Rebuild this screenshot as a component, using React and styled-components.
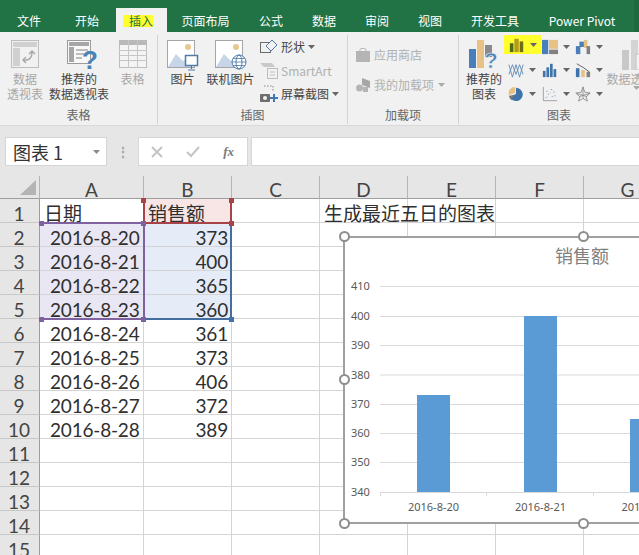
import React from 'react';
import styled, { createGlobalStyle } from 'styled-components';

const Global = createGlobalStyle`
  html, body { margin: 0; padding: 0; background: #fff; }
  body { font-family: "Noto Sans CJK SC", "Noto Sans", sans-serif; }
`;

const tabs = [
  ['文件', 58], ['开始', 58], ['插入', 51], ['页面布局', 77], ['公式', 54], ['数据', 52],
  ['审阅', 54], ['视图', 52], ['开发工具', 78], ['Power Pivot', 96],
];

const rows = [
  ['日期', '销售额', '', '生成最近五日的图表'],
  ['2016-8-20', '373'], ['2016-8-21', '400'], ['2016-8-22', '365'], ['2016-8-23', '360'],
  ['2016-8-24', '361'], ['2016-8-25', '373'], ['2016-8-26', '406'], ['2016-8-27', '372'],
  ['2016-8-28', '389'], [], [], [], [], [],
];
const letters = ['A', 'B', 'C', 'D', 'E', 'F', 'G'];

const ticks = [410, 400, 390, 380, 370, 360, 350, 340];
const tickY = [286, 316, 345, 374.5, 404, 433, 462, 492];
const bars = [
  { x: 417, y: 395, label: '2016-8-20', cx: 433.5 },
  { x: 524, y: 316, label: '2016-8-21', cx: 540.5 },
  { x: 630, y: 419, label: '2016-8-22', cx: 647 },
];

function Caret({ color = '#666' }) {
  return <svg width="7" height="4" viewBox="0 0 7 4"><path d="M0 0h7L3.500 4z" fill={color} /></svg>;
}

function PivotIcon() {
  return (
    <svg width="28" height="28" viewBox="0 0 28 28">
      <rect x="0.5" y="0.500" width="27" height="27" fill="#f1f1f1" stroke="#bdbdbd" />
      <rect x="2" y="2" width="24" height="5" fill="#d0d0d0" />
      <rect x="2" y="8" width="7" height="18" fill="#d0d0d0" />
      <path d="M12 20c6 1 9-2 9-8M18 14l3-3 3 3M15 17l-3 3 3 3" fill="none" stroke="#a9a9a9" strokeWidth="1.500" />
    </svg>
  );
}

function RecommendPivotIcon() {
  return (
    <svg width="28" height="28" viewBox="0 0 28 28" overflow="visible">
      <rect x="2.500" y="0.500" width="23" height="23" fill="#f8f8f8" stroke="#9c9c9c" />
      <rect x="4" y="2" width="20" height="4" fill="#a6a6a6" />
      <rect x="4" y="7" width="5" height="15" fill="#a6a6a6" />
      <path d="M11 10h12M11 14h8M11 18h6" stroke="#bdbdbd" strokeWidth="2" />
      <text x="25" y="29" textAnchor="middle" fontFamily="Liberation Sans" fontWeight="700" fontSize="26" fill="#4a83b5">?</text>
    </svg>
  );
}

function TableIcon() {
  return (
    <svg width="28" height="28" viewBox="0 0 28 28">
      <rect x="0.500" y="0.500" width="27" height="27" fill="#f4f4f4" stroke="#bcbcbc" />
      <rect x="0" y="0" width="28" height="5" fill="#b9b9b9" />
      <path d="M0 10.500h28M0 15.500h28M0 20.500h28M9.500 0v28M18.500 0v28" stroke="#c6c6c6" />
    </svg>
  );
}

function PictureBase() {
  return (
    <>
      <rect x="0.500" y="0.500" width="27" height="27" fill="#fff" stroke="#a5a5a5" />
      <circle cx="21" cy="7" r="3" fill="#e6c88e" />
      <path d="M1 27l8-13 7 7 3-2 5 8z" fill="#c6d5e8" />
    </>
  );
}

function PictureIcon() {
  return (
    <svg width="32" height="32" viewBox="0 0 32 32">
      <PictureBase />
      <rect x="18.500" y="15.500" width="12" height="10" fill="#fff" stroke="#4f7ba6" strokeWidth="1.500" />
      <path d="M24.500 26v3M21 30h7" stroke="#4f7ba6" strokeWidth="1.200" />
    </svg>
  );
}

function OnlineIcon() {
  return (
    <svg width="32" height="32" viewBox="0 0 32 32">
      <PictureBase />
      <circle cx="24" cy="22" r="7" fill="#fff" stroke="#4f7ba6" />
      <ellipse cx="24" cy="22" rx="3" ry="7" fill="none" stroke="#4f7ba6" />
      <path d="M17 22h14M18 18.500h12M18 25.500h12" stroke="#4f7ba6" strokeWidth="0.800" />
    </svg>
  );
}

function ShapesIcon() {
  return (
    <svg width="18" height="16" viewBox="0 0 18 16">
      <rect x="0.500" y="3.500" width="10" height="10" fill="none" stroke="#6b6b6b" />
      <path d="M12 1l5 5-6 6-5-5z" fill="#f1f1f1" stroke="#4f7ba6" />
    </svg>
  );
}

function SmartArtIcon() {
  return (
    <svg width="18" height="18" viewBox="0 0 18 18">
      <path d="M0 2h12l3 4H4z" fill="#c9c9c9" />
      <rect x="7.500" y="7.500" width="10" height="10" fill="#f1f1f1" stroke="#bdbdbd" />
      <path d="M10 11h5M10 14h5" stroke="#c4c4c4" />
    </svg>
  );
}

function ScreenshotIcon() {
  return (
    <svg width="18" height="18" viewBox="0 0 18 18">
      <path d="M4 1h9v5" fill="none" stroke="#8a8a8a" strokeDasharray="1.500 1.500" />
      <rect x="0" y="9" width="10" height="8" rx="1" fill="#6d6d6d" />
      <circle cx="5" cy="13" r="2" fill="#f1f1f1" />
      <path d="M14 9v8M10 13h8" stroke="#3f78b5" strokeWidth="2" />
    </svg>
  );
}

function StoreIcon() {
  return (
    <svg width="14" height="16" viewBox="0 0 14 16">
      <path d="M0 4h14v11H0z" fill="#b5b5b5" />
      <path d="M4 5V2.500C4 1 10 1 10 2.500V5" fill="none" stroke="#b5b5b5" />
    </svg>
  );
}

function AddinIcon() {
  return (
    <svg width="14" height="16" viewBox="0 0 14 16">
      <path d="M6 1l8 3v7l-8-3z" fill="#a7a7a7" />
      <circle cx="3.500" cy="11" r="3.500" fill="#b5b5b5" />
      <rect x="7" y="10" width="5" height="5" fill="#b5b5b5" />
    </svg>
  );
}

function RecommendChartIcon() {
  return (
    <svg width="30" height="30" viewBox="0 0 30 30" overflow="visible">
      <rect x="0" y="9" width="7" height="19" fill="#4a7ebb" />
      <rect x="8" y="0" width="7" height="28" fill="#e8c184" />
      <rect x="16" y="5" width="7" height="12" fill="#8a8a8a" />
      <text x="22" y="28" textAnchor="middle" fontFamily="Liberation Sans" fontWeight="700" fontSize="22" fill="#4a83b5" stroke="#f1f1f1" strokeWidth="0.500">?</text>
    </svg>
  );
}

const miniIcons = [
  <><rect x="1" y="7" width="4" height="10" fill="#4f6d12" /><rect x="6" y="2" width="5" height="15" fill="#b59a22" /><rect x="12" y="5" width="4" height="12" fill="#6f6f12" /></>,
  <><rect x="0" y="1" width="7" height="16" fill="#4a7ebb" /><rect x="8" y="1" width="10" height="10" fill="#e8c184" /><rect x="8" y="12" width="10" height="5" fill="#808080" /></>,
  <><rect x="1" y="8" width="5" height="9" fill="#4a7ebb" /><rect x="5" y="3" width="5" height="6" fill="#4a7ebb" /><rect x="10" y="1" width="4" height="9" fill="#e8c184" /><rect x="13" y="8" width="4" height="9" fill="#808080" /></>,
  <path d="M1 3l4 14 4-14 4 14 4-14M1 14l4-11 4 11 4-11 4 11" fill="none" stroke="#5d88b5" strokeWidth="1" />,
  <><rect x="1" y="10" width="3" height="7" fill="#3f73ab" /><rect x="5" y="6" width="3" height="11" fill="#3f73ab" /><rect x="9" y="2" width="3" height="15" fill="#3f73ab" /><rect x="13" y="8" width="3" height="9" fill="#3f73ab" /></>,
  <><rect x="1" y="7" width="4" height="10" fill="#3f73ab" /><rect x="7" y="9" width="4" height="8" fill="#e8c184" /><rect x="13" y="11" width="4" height="6" fill="#808080" /><path d="M2 2l7 4 7 5" fill="none" stroke="#555" /></>,
  <><path d="M9 2a7.500 7.500 0 1 1-7 10l7-3z" fill="#3f73ab" /><path d="M8 1v7l-7 2a7 7 0 0 1 7-9z" fill="#e8c184" /><path d="M1 11l6-1-3 6a7 7 0 0 1-3-5z" fill="#777" /></>,
  <><path d="M1.500 1v15.500H17" fill="none" stroke="#9a9a9a" /><path d="M4 13h1M7 9h1M5 6h1M11 12h1M13 7h1M10 4h1M14 11h1" stroke="#4a7ebb" /><path d="M6 12h1M9 8h1M12 5h1" stroke="#e8c184" /></>,
  <path d="M9 1l2 6 6 1-4.500 4 1.500 5-5-3-5 3 1.500-5L1 8l6-1zM9 1v13M1 8l12.500 4M17 8L4.500 12" fill="none" stroke="#8e8e8e" />,
];

const Page = styled.div`
  width: 639px;
  height: 555px;
  overflow: hidden;
  display: flex;
  flex-direction: column;
  background: #fff;
`;

const TabBar = styled.div`
  height: 32px;
  flex: none;
  display: flex;
  align-items: flex-end;
  background: #217346;
`;

const Tab = styled.div`
  width: ${p => p.$w}px;
  height: 24px;
  flex: none;
  display: flex;
  align-items: center;
  justify-content: center;
  font-size: 12px;
  white-space: nowrap;
  color: ${p => (p.$active ? '#217346' : '#fff')};
  background: ${p => (p.$active ? '#f1f1f1' : 'transparent')};
`;

const Marker = styled.span`
  background: #ffff2e;
  padding-left: 6px;
  margin: 1px 7px 0 0;
  line-height: 12px;
`;

const TabEdge = styled.div`
  margin-left: auto;
  width: 5px;
  height: 32px;
  background: #1d6a3f;
`;

const Ribbon = styled.div`
  height: 93px;
  flex: none;
  display: flex;
  overflow: hidden;
  background: #f1f1f1;
  font-size: 12px;
  color: #444;
`;

const Group = styled.div`
  width: ${p => p.$w}px;
  flex: none;
  box-sizing: border-box;
  display: flex;
  flex-direction: column;
  margin: 3px 0 1px;
  border-right: ${p => (p.$last ? 'none' : '1px solid #d4d4d4')};
`;

const GroupBody = styled.div`
  flex: 1;
  display: flex;
  padding-left: ${p => p.$pad || 0}px;
  min-height: 0;
`;

const GroupLabel = styled.div`
  height: 19px;
  line-height: 19px;
  text-align: center;
  color: #666;
`;

const LargeButton = styled.div`
  width: ${p => p.$w}px;
  flex: none;
  display: flex;
  flex-direction: column;
  align-items: center;
  color: ${p => (p.$muted ? '#a8a8a8' : '#444')};
  line-height: 15px;
  text-align: center;
  white-space: nowrap;
`;

const IconSlot = styled.div`
  height: 30px;
  padding-top: 5px;
  margin-bottom: 1px;
  display: flex;
  justify-content: center;
`;

const SmallColumn = styled.div`
  display: flex;
  flex-direction: column;
  padding-top: ${p => p.$top || 0}px;
  padding-left: ${p => p.$left || 0}px;
  gap: ${p => p.$gap || 0}px;
`;

const SmallButton = styled.div`
  height: 23px;
  display: flex;
  align-items: center;
  gap: ${p => p.$gap || 3}px;
  white-space: nowrap;
  color: ${p => (p.$muted ? '#b0b0b0' : '#444')};
`;

const MiniGrid = styled.div`
  display: grid;
  grid-template-columns: repeat(3, 33.500px);
  grid-auto-rows: 23.500px;
`;

const MiniChart = styled.div`
  display: flex;
  align-items: center;
  gap: 5px;
  align-self: ${p => (p.$marked ? 'start' : 'center')};
  height: ${p => (p.$marked ? '19px' : 'auto')};
  width: ${p => (p.$marked ? '37px' : 'auto')};
  box-sizing: border-box;
  margin-left: ${p => (p.$marked ? '-2px' : '0')};
  padding-left: ${p => (p.$marked ? '5px' : '2px')};
  background: ${p => (p.$marked ? '#ffff2e' : 'transparent')};
`;

const FormulaRow = styled.div`
  height: 51px;
  flex: none;
  display: flex;
  padding: 11px 0 0 5px;
  box-sizing: border-box;
  background: #e6e6e6;
  border-top: 1px solid #d9d9d9;
`;

const InputBox = styled.div`
  height: 29px;
  box-sizing: border-box;
  background: #fff;
  border: 1px solid #d6d6d6;
  display: flex;
  align-items: center;
`;

const NameBox = styled(InputBox)`
  width: 102px;
  padding: 0 6px 0 7px;
  justify-content: space-between;
  font-size: 18px;
  color: #333;
`;

const Dots = styled.div`
  width: 31px;
  height: 29px;
  display: flex;
  align-items: center;
  justify-content: center;
  color: #a8a8a8;
  font-size: 14px;
  line-height: 5px;
  font-weight: 700;
`;

const FxBox = styled(InputBox)`
  width: 110px;
  justify-content: space-between;
  padding: 0 13px 0 12px;
`;

const FxLabel = styled.span`
  font-family: "Liberation Serif", serif;
  font-style: italic;
  font-weight: 700;
  font-size: 13px;
  color: #7a7a7a;
`;

const FormulaInput = styled(InputBox)`
  flex: 1;
  margin-left: 3px;
  border-right: none;
`;

const Sheet = styled.div`
  position: relative;
  flex: 1;
  min-height: 0;
`;

const SheetGrid = styled.div`
  display: grid;
  grid-template-columns: 40px 104px repeat(6, 88px);
  grid-template-rows: 23px repeat(15, 24px);
  font-family: "Lato", "Noto Sans CJK SC", sans-serif;
  font-size: 19px;
  color: #333;
`;

const Corner = styled.div`
  background: #e6e6e6;
  border-bottom: 1px solid #9e9e9e;
  border-right: 1px solid #b5b5b5;
  box-sizing: border-box;
  display: flex;
  align-items: flex-end;
  justify-content: flex-end;
  padding: 0 3px 3px 0;
`;

const ColHead = styled.div`
  background: #e6e6e6;
  border-bottom: 1px solid #9e9e9e;
  border-right: 1px solid #b5b5b5;
  box-sizing: border-box;
  text-align: center;
  line-height: 28px;
  color: #444;
`;

const RowHead = styled.div`
  background: #e6e6e6;
  border-bottom: 1px solid #c8c8c8;
  border-right: 1px solid #9e9e9e;
  box-sizing: border-box;
  text-align: center;
  line-height: 25px;
  padding: 2px 1px 0 0;
  color: #444;
`;

const Cell = styled.div`
  box-sizing: border-box;
  border-right: 1px solid #d4d4d4;
  border-bottom: 1px solid #d4d4d4;
  padding: 2px ${p => (p.$num ? '3px' : '4px')} 0 ${p => (p.$date ? '10px' : '4px')};
  text-align: ${p => (p.$num ? 'right' : 'left')};
  line-height: 25px;
  letter-spacing: ${p => (p.$date || p.$num ? '-0.2px' : '0')};
  white-space: nowrap;
  color: #2f2f2f;
  background: ${p => p.$tint || 'transparent'};
`;

const Range = styled.div`
  position: absolute;
  left: ${p => p.$l}px;
  top: ${p => p.$t}px;
  width: ${p => p.$w}px;
  height: ${p => p.$h}px;
  box-sizing: border-box;
  border: 2px solid ${p => p.$c};
  border-left-width: ${p => (p.$open ? 0 : 2)}px;
  border-top-width: ${p => (p.$noTop ? 0 : 2)}px;
  pointer-events: none;
`;

const Grip = styled.div`
  position: absolute;
  left: ${p => p.$x - 2.5}px;
  top: ${p => p.$y - 2.5}px;
  width: 5px;
  height: 5px;
  background: ${p => p.$c};
`;

const Chart = styled.div`
  position: absolute;
  left: 343px;
  top: 60px;
  width: 400px;
  height: 288px;
  box-sizing: border-box;
  background: #fff;
  border: 2px solid #a0a0a0;
`;

const ChartPlot = styled.svg`
  display: block;
  font-family: "Noto Sans", sans-serif;
  font-size: 11px;
`;

const Handle = styled.div`
  position: absolute;
  left: ${p => p.$x - 5.5}px;
  top: ${p => p.$y - 5.5}px;
  width: 11px;
  height: 11px;
  box-sizing: border-box;
  border-radius: 50%;
  background: #fff;
  border: 2px solid #8e8e8e;
`;

function tintFor(r, c) {
  if (r >= 1 && r <= 4 && c === 0) return '#e9e7f3';
  if (r >= 1 && r <= 4 && c === 1) return '#e6ecf7';
  if (r === 0 && c === 1) return '#f8e6e6';
  return undefined;
}

function SheetCells() {
  const out = [<Corner key="corner"><svg width="16" height="15" viewBox="0 0 16 15"><path d="M16 0v15H0z" fill="#b4b4b4" /></svg></Corner>];
  letters.forEach(l => out.push(<ColHead key={l}>{l}</ColHead>));
  rows.forEach((row, r) => {
    out.push(<RowHead key={`h${r}`}>{r + 1}</RowHead>);
    letters.forEach((l, c) => {
      out.push(
        <Cell key={`${l}${r}`} $date={r > 0 && c === 0} $num={r > 0 && c === 1} $tint={tintFor(r, c)}>
          {row[c]}
        </Cell>
      );
    });
  });
  return out;
}

export default function App() {
  return (
    <Page>
      <Global />
      <TabBar>
        {tabs.map(([name, w]) => (
          <Tab key={name} $w={w} $active={name === '插入'}>
            {name === '插入' ? <Marker>插入</Marker> : name}
          </Tab>
        ))}
        <TabEdge />
      </TabBar>

      <Ribbon>
        <Group $w={158}>
          <GroupBody>
            <LargeButton $w={50} $muted><IconSlot><PivotIcon /></IconSlot>数据<br />透视表</LargeButton>
            <LargeButton $w={58}><IconSlot><RecommendPivotIcon /></IconSlot>推荐的<br />数据透视表</LargeButton>
            <LargeButton $w={49} $muted><IconSlot><TableIcon /></IconSlot>表格</LargeButton>
          </GroupBody>
          <GroupLabel>表格</GroupLabel>
        </Group>

        <Group $w={190}>
          <GroupBody $pad={1}>
            <LargeButton $w={47}><IconSlot><PictureIcon /></IconSlot>图片</LargeButton>
            <LargeButton $w={49}><IconSlot><OnlineIcon /></IconSlot>联机图片</LargeButton>
            <SmallColumn $left={5} $gap={0.5}>
              <SmallButton><ShapesIcon />形状 <Caret /></SmallButton>
              <SmallButton $muted><SmartArtIcon />SmartArt</SmallButton>
              <SmallButton><ScreenshotIcon />屏幕截图 <Caret /></SmallButton>
            </SmallColumn>
          </GroupBody>
          <GroupLabel>插图</GroupLabel>
        </Group>

        <Group $w={111}>
          <GroupBody $pad={8}>
            <SmallColumn $top={8} $gap={7}>
              <SmallButton $muted $gap={4}><StoreIcon />应用商店</SmallButton>
              <SmallButton $muted $gap={4}><AddinIcon />我的加载项 <Caret color="#aaa" /></SmallButton>
            </SmallColumn>
          </GroupBody>
          <GroupLabel>加载项</GroupLabel>
        </Group>

        <Group $w={200} $last>
          <GroupBody $pad={3}>
            <LargeButton $w={44}><IconSlot><RecommendChartIcon /></IconSlot>推荐的<br />图表</LargeButton>
            <MiniGrid>
              {miniIcons.map((icon, i) => (
                <MiniChart key={i} $marked={i === 0}>
                  <svg width="16" height="16" viewBox="0 0 18 18">{icon}</svg>
                  <Caret />
                </MiniChart>
              ))}
            </MiniGrid>
            <LargeButton $w={60} $muted>
              <IconSlot>
                <svg width="30" height="30" viewBox="0 0 30 30">
                  <rect x="0" y="10" width="7" height="20" fill="#c8c8c8" />
                  <rect x="9" y="0" width="7" height="30" fill="#d4d4d4" />
                  <rect x="14" y="14" width="16" height="16" fill="#f1f1f1" stroke="#c4c4c4" />
                </svg>
              </IconSlot>
              数据透视图
              <Caret color="#aaa" />
            </LargeButton>
          </GroupBody>
          <GroupLabel>图表</GroupLabel>
        </Group>
      </Ribbon>

      <FormulaRow>
        <NameBox>
          图表 1
          <Caret color="#8a8a8a" />
        </NameBox>
        <Dots>⋮</Dots>
        <FxBox>
          <svg width="12" height="12" viewBox="0 0 12 12"><path d="M1 1l10 10M11 1L1 11" stroke="#c4c4c4" strokeWidth="2" /></svg>
          <svg width="14" height="12" viewBox="0 0 14 12"><path d="M1 6l4 4 8-9" fill="none" stroke="#c4c4c4" strokeWidth="2" /></svg>
          <FxLabel>fx</FxLabel>
        </FxBox>
        <FormulaInput />
      </FormulaRow>

      <Sheet>
        <SheetGrid><SheetCells /></SheetGrid>

        <Range $l={144} $t={47} $w={88} $h={97} $c="#456f9e" $open $noTop />
        <Range $l={40} $t={46} $w={105} $h={98} $c="#80619f" $open />
        <Range $l={143} $t={23} $w={89} $h={25} $c="#a8434a" $noTop />
        <Grip $x={41} $y={47} $c="#80619f" />
        <Grip $x={143.500} $y={47} $c="#80619f" />
        <Grip $x={41} $y={143.500} $c="#80619f" />
        <Grip $x={143.500} $y={143.500} $c="#80619f" />
        <Grip $x={143.500} $y={24} $c="#a8434a" />
        <Grip $x={231.500} $y={24} $c="#a8434a" />
        <Grip $x={231.500} $y={47} $c="#a8434a" />
        <Grip $x={231.500} $y={143.500} $c="#3f73ab" />

        <Chart>
          <ChartPlot width="398" height="286" viewBox="345 238 398 286">
            <text x="582" y="263" textAnchor="middle" fontSize="18" fill="#7f7f7f" fontFamily="Noto Sans CJK SC">销售额</text>
            {ticks.map((t, i) => (
              <g key={t}>
                <line x1="380" x2="745" y1={tickY[i] + 0.5} y2={tickY[i] + 0.5} stroke="#d9d9d9" />
                <text x="351" y={tickY[i] + 4} fill="#595959">{t}</text>
              </g>
            ))}
            {[380.5, 486.5, 593.5].map(x => <line key={x} x1={x} x2={x} y1="492" y2="496" stroke="#d9d9d9" />)}
            {bars.map(b => (
              <g key={b.label}>
                <rect x={b.x} y={b.y} width="33" height={492 - b.y} fill="#5b9bd5" />
                <text x={b.cx} y="511" textAnchor="middle" fill="#595959">{b.label}</text>
              </g>
            ))}
          </ChartPlot>
        </Chart>
        <Handle $x={344} $y={60} />
        <Handle $x={583} $y={60} />
        <Handle $x={344} $y={203} />
        <Handle $x={344} $y={347} />
        <Handle $x={583} $y={347} />
      </Sheet>
    </Page>
  );
}
